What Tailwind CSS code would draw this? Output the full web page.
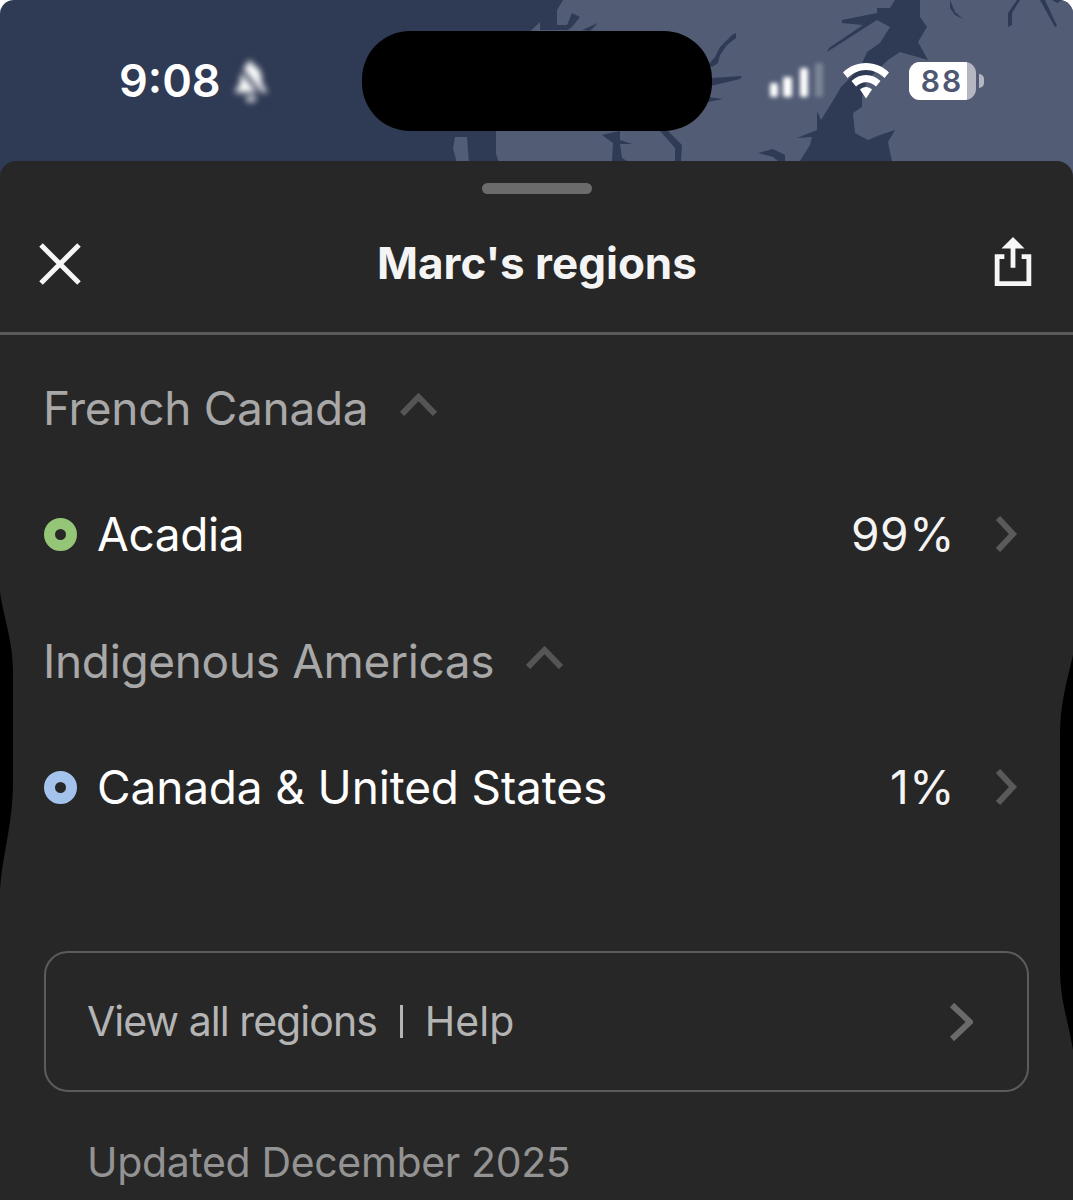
<!DOCTYPE html>
<html lang="en">
<head>
    <meta charset="UTF-8">
    <meta name="viewport" content="width=device-width, initial-scale=1.0">
    <title>Marc's regions</title>
    <script src="https://cdn.jsdelivr.net/npm/@tailwindcss/browser@4"></script>
</head>
<body class="bg-white overflow-hidden">
<div class="relative w-[1073px] h-[1200px] overflow-hidden font-['Inter',sans-serif] antialiased">

    <!-- map + status bar -->
    <div class="relative h-[176px] -mb-[15px] rounded-t-[14px] overflow-hidden bg-[#2f3a54]">
        <svg class="absolute inset-0" width="1073" height="176" viewBox="0 0 1073 176">
            <path fill="#525c75" d="M563 0H1073V176H503L496 154V133L500 60Z"/>
            <path fill="#525c75" d="M455 137H467L470 176H460L453 148Z"/>
            <g fill="#2f3a54">
                <path d="M540 0H563L557 10V25H567L572 13L580 17L572 27L568 30H540Z"/>
                <path d="M582 30L598 23L590 31Z"/>
                <path d="M708 65L715 57L720 47L732 35L736 33V38L727 45L720 55L718 63L712 67Z"/>
                <path d="M711 78L742 76L740 79L727 82L711 86Z"/>
                <path d="M708 97L723 99L708 102Z"/>
                <path d="M612 161L613 143L602 135L620 131V140L632 144H620L622 158L627 161V176H612Z"/>
                <path d="M660 131H668L682 145L680 176H675V148Z"/>
                <path d="M758 153L773 149L785 155V176H778V161L773 157Z"/>
                <path d="M895 0H920V17L927 27L918 42L928 60L900 52L888 60L867 80L862 97V107L853 113L855 133L868 140L880 135L895 130L888 142L895 176H795L800 161L810 145L812 137L797 138L817 130V111L821 120L834 99L841 87L860 68L867 52L880 43L890 27L877 20L827 52L829 48L863 25L842 23V20L877 13V8L890 8Z"/>
                <path d="M950 0L955 12L963 19L955 15L950 8Z"/>
                <path d="M1017 0L1008 13V27L1012 25V13L1020 0Z"/>
                <path d="M1040 0L1055 27L1057 26L1045 0Z"/>
                <path d="M1052 0L1057 3L1062 0Z"/>
            </g>
        </svg>

        <div class="relative grid grid-cols-[362px_350px_1fr] pt-[31px]">
            <div class="h-[100px] flex items-center pl-[119px] pb-[2px]">
                <span class="text-[45px] font-semibold leading-none text-white">9:08</span>
                <svg class="ml-[9px] mt-[4px] blur-[3px]" width="42" height="46" viewBox="0 0 40 44">
                    <path fill="#fff" d="M19 2c2 0 3 2 3 4 6 2 8 7 8 13 0 6 3 9 6 13H4c3-4 6-7 6-13 0-6 2-11 6-13 0-2 1-4 3-4Z"/>
                    <path fill="#fff" d="M15 36h10c0 3-2 5-5 5s-5-2-5-5Z"/>
                    <path stroke="#2f3a54" stroke-width="4" d="M6 4L36 42"/>
                </svg>
            </div>
            <div class="h-[100px] rounded-[48px] bg-black"></div>
            <div class="h-[100px] flex items-center pl-[55px]">
                <svg class="blur-[2px]" width="60" height="38" viewBox="0 0 60 38">
                    <rect fill="#fff" x="3" y="21" width="8" height="14" rx="2"/>
                    <rect fill="#fff" x="16" y="15" width="9" height="20" rx="2"/>
                    <rect fill="#fff" x="33" y="6" width="8" height="29" rx="2"/>
                    <rect fill="#fff" fill-opacity="0.25" x="48" y="1" width="8" height="34" rx="2"/>
                </svg>
                <svg class="ml-[16px]" width="46" height="36" viewBox="0 0 46 36" fill="#fff">
                    <path d="M23 0C14 0 6 3.500 0 9.500L4.500 15C9.500 10 16 7 23 7S36.500 10 41.500 15L46 9.500C40 3.500 32 0 23 0Z"/>
                    <path d="M23 12C17.500 12 12.500 14.200 8.500 18L13 23.500C15.700 20.800 19.200 19.200 23 19.200S30.300 20.800 33 23.500L37.500 18C33.500 14.200 28.500 12 23 12Z"/>
                    <path d="M23 24C20.700 24 18.500 25 17 26.500L23 35.500L29 26.500C27.500 25 25.300 24 23 24Z"/>
                </svg>
                <div class="ml-[20px] flex items-center">
                    <div class="w-[67px] h-[38px] rounded-[11px] overflow-hidden flex bg-[#b4b7c1]">
                        <div class="w-[58px] bg-white flex items-center justify-center pl-[8px] text-[30px] font-semibold tracking-[2px] leading-none text-[#4f5872]">88</div>
                    </div>
                    <div class="ml-[3px] w-[5px] h-[14px] rounded-r-full bg-[#b4b7c1]"></div>
                </div>
            </div>
        </div>
    </div>

    <!-- sheet -->
    <div class="relative h-[1039px] rounded-t-[16px] bg-[#272727]">
        <div class="pt-[22px] flex justify-center">
            <div class="w-[110px] h-[11px] rounded-full bg-[#6b6b6b]"></div>
        </div>

        <div class="h-[141px] flex items-center justify-between pl-[39px] pr-[40px] border-b-[3px] border-[#5a5a5a]">
            <svg class="mt-[1px]" width="42" height="42" viewBox="0 0 42 42" fill="none" stroke="#f6f6f6" stroke-width="5">
                <path d="M2 2L40 40M40 2L2 40"/>
            </svg>
            <h1 class="text-[44px] font-bold leading-none text-[#f4f4f4]">Marc's regions</h1>
            <svg width="40" height="50" viewBox="0 0 40 52" fill="none" class="mb-[2px]">
                <path stroke="#f6f6f6" stroke-width="5" d="M11 20.500H3.500V48.500H36.500V20.500H29"/>
                <path stroke="#f6f6f6" stroke-width="5" d="M20 8V32"/>
                <path fill="#f6f6f6" d="M20 0L32 12H8Z"/>
            </svg>
        </div>

        <div class="mt-[10px] grid auto-rows-[126.500px] pl-[44px] pr-[56px]">
            <div class="flex items-center">
                <span class="-ml-[1px] text-[46px] tracking-[-0.3px] leading-none text-[#a8a8a8]">French Canada</span>
                <svg class="ml-[32px] mb-[8px]" width="37" height="24" viewBox="0 0 37 24" fill="none" stroke="#555" stroke-width="6"><path d="M2 22L18.500 5L35 22"/></svg>
            </div>
            <div class="flex items-center">
                <div class="w-[33px] h-[33px] rounded-full border-[11px] border-[#95c576] bg-[#272727]"></div>
                <span class="ml-[20px] mb-[2px] text-[46px] tracking-[-0.35px] leading-none text-white">Acadia</span>
                <span class="ml-auto mb-[2px] text-[46px] tracking-[0.6px] leading-none text-[#f4f4f4]">99%</span>
                <svg class="ml-[38px] mb-[2px]" width="24" height="36" viewBox="0 0 24 36" fill="none" stroke="#5a5a5a" stroke-width="6"><path d="M5 2L20 18L5 34"/></svg>
            </div>
            <div class="flex items-center">
                <span class="-ml-[1px] text-[46px] tracking-[-0.35px] leading-none text-[#a8a8a8]">Indigenous Americas</span>
                <svg class="ml-[32px] mb-[8px]" width="37" height="24" viewBox="0 0 37 24" fill="none" stroke="#555" stroke-width="6"><path d="M2 22L18.500 5L35 22"/></svg>
            </div>
            <div class="flex items-center">
                <div class="w-[33px] h-[33px] rounded-full border-[11px] border-[#a3c3ec] bg-[#272727]"></div>
                <span class="ml-[20px] mb-[2px] text-[46px] tracking-[-0.15px] leading-none text-white">Canada &amp; United States</span>
                <span class="ml-auto mb-[2px] text-[46px] tracking-[0.6px] leading-none text-[#f4f4f4]">1%</span>
                <svg class="ml-[38px] mb-[2px]" width="24" height="36" viewBox="0 0 24 36" fill="none" stroke="#5a5a5a" stroke-width="6"><path d="M5 2L20 18L5 34"/></svg>
            </div>
        </div>

        <div class="mt-[100px] ml-[44px] w-[985px] h-[141px] rounded-[24px] border-2 border-[#5c5c5c] flex items-center pl-[41px] pr-[54px]">
            <span class="text-[41px] tracking-[-0.95px] leading-none text-[#b4b4b4]">View all regions</span>
            <div class="ml-[23px] w-[3px] h-[33px] bg-[#b4b4b4]"></div>
            <span class="ml-[22px] text-[41px] leading-none text-[#b4b4b4]">Help</span>
            <svg class="ml-auto" width="24" height="38" viewBox="0 0 24 38" fill="none" stroke="#6a6a6a" stroke-width="6"><path d="M3 2L21 19L3 36"/></svg>
        </div>

        <p class="mt-[48px] ml-[87px] text-[41px] tracking-[-0.35px] leading-[44px] text-[#939393]">Updated December 2025</p>
    </div>

    <!-- black edges of the phone cut into the sheet -->
    <svg class="absolute inset-0 pointer-events-none" width="1073" height="1200" viewBox="0 0 1073 1200" fill="#000">
        <path d="M0 592C4 620 13 640 13 672V780C13 825 3 850 0 890Z"/>
        <path d="M1073 655C1066 685 1060 705 1060 735V968C1060 1000 1068 1020 1073 1050Z"/>
    </svg>
</div>
</body>
</html>
